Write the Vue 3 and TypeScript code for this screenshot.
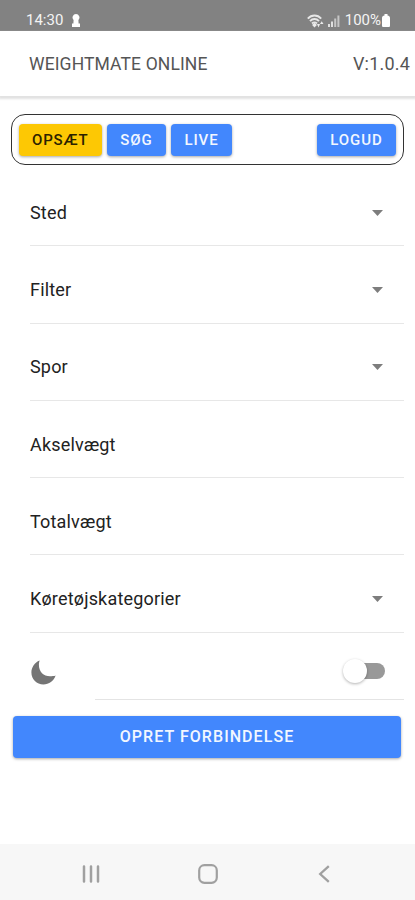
<script setup lang="ts">
import { ref } from 'vue'

interface Field {
  label: string
  select: boolean
}

const fields: Field[] = [
  { label: 'Sted', select: true },
  { label: 'Filter', select: true },
  { label: 'Spor', select: true },
  { label: 'Akselvægt', select: false },
  { label: 'Totalvægt', select: false },
  { label: 'Køretøjskategorier', select: true },
]

const tabs = ['opsæt', 'søg', 'live'] as const
const active = ref<string>('opsæt')
const dark = ref(false)
</script>

<template>
  <div class="screen">
    <div class="status">
      <span class="clock">14:30</span>
      <svg class="keyhole" width="8" height="13" viewBox="0 0 8 13">
        <path d="M4 0a3.500 3.500 0 0 1 2.400 6L6.600 9.500H8V13H0V9.500h1.400L1.600 6A3.500 3.500 0 0 1 4 0z" fill="#fff" />
      </svg>
      <svg class="wifi" width="17" height="14" viewBox="0 0 17 14">
        <g fill="none" stroke="#e6e6e6" stroke-width="1.900">
          <path d="M.8 4.600C4.600.4 10.400.4 14.200 4.600" />
          <path d="M3 7.200c2.600-2.900 6.400-2.900 9 0" />
          <path d="M5 9.500c1.500-1.500 3.500-1.500 5 0" />
        </g>
        <path d="M7.500 8.800l2.400 2.300-2.400 2.500-2.400-2.500zM10 10h3l-1.500 3.500zM13 10l1.700-2.700 1.800 2.700z" fill="#ececec" />
      </svg>
      <svg class="signal" width="12" height="12" viewBox="0 0 12 12">
        <path d="M0 9h2v3H0zM3 6.500h2V12H3z" fill="#e0e0e0" />
        <path d="M6.200 3.500h2V12h-2zM9.400.5h2V12h-2z" fill="#c6c6c6" />
      </svg>
      <span class="percent">100%</span>
      <svg class="battery" width="8" height="13" viewBox="0 0 8 13">
        <path d="M2.500 0h3v1.500C7 1.500 8 2.500 8 4v7.500c0 1-.5 1.500-1.500 1.500h-5C.5 13 0 12.500 0 11.500V4c0-1.500 1-2.500 2.500-2.500z" fill="#fff" />
      </svg>
    </div>

    <header class="header">
      <span class="title">WEIGHTMATE ONLINE</span>
      <span class="version">V:1.0.4</span>
    </header>

    <nav class="tabs">
      <button
        v-for="(tab, index) in tabs"
        :key="tab"
        :class="['btn', 'tab-' + index, { active: active === tab }]"
        @click="active = tab"
      >{{ tab.toUpperCase() }}</button>
      <button class="btn logout">LOGUD</button>
    </nav>

    <main class="list">
      <div v-for="field in fields" :key="field.label" class="row">
        <span class="label">{{ field.label }}</span>
        <svg v-if="field.select" class="caret" width="11" height="6" viewBox="0 0 11 6">
          <path d="M0 0h11L5.500 6z" fill="#7d7d7d" />
        </svg>
      </div>
      <div class="theme">
        <svg class="moon" width="25" height="25" viewBox="0 0 25 25">
          <path d="M8.600.4A14 14 0 0 0 7.900 4.800C7.900 11.800 12.500 16.300 19 16.300c2 0 4-.2 5.600-.8C22.800 20.800 18 24.400 12.400 24.400 5.700 24.400.4 19.100.4 12.400.4 7.200 3.700 2.300 8.600.4z" fill="#757575" />
        </svg>
        <div class="theme-inner">
          <button class="toggle" :class="{ on: dark }" aria-label="Mørkt tema" @click="dark = !dark">
            <span class="thumb"></span>
          </button>
        </div>
      </div>
    </main>

    <button class="btn connect">OPRET FORBINDELSE</button>

    <footer class="navbar">
      <svg width="18" height="18" viewBox="0 0 18 18">
        <path d="M2 1.500v15M9 1.500v15M16 1.500v15" stroke="#a0a0a0" stroke-width="2.500" stroke-linecap="round" />
      </svg>
      <svg width="20" height="20" viewBox="0 0 20 20">
        <rect x="1.200" y="1.200" width="17.600" height="17.600" rx="5.200" fill="none" stroke="#a0a0a0" stroke-width="2.200" />
      </svg>
      <svg width="12" height="18" viewBox="0 0 12 18">
        <path d="M10.800 1.200L2.200 9l8.600 7.800" fill="none" stroke="#a0a0a0" stroke-width="2.300" />
      </svg>
    </footer>
  </div>
</template>

<style>
body {
  margin: 0;
  background: #fff;
}
</style>

<style scoped>
.screen {
  box-sizing: border-box;
  width: 415px;
  height: 900px;
  display: flex;
  flex-direction: column;
  overflow: hidden;
  background: #fff;
  font-family: Roboto, sans-serif;
  color: #222;
}
.status {
  flex: none;
  box-sizing: border-box;
  height: 31px;
  padding: 10px 25px 0 26px;
  display: flex;
  align-items: center;
  background: #828282;
  color: #f4f4f4;
  font-size: 15px;
  line-height: 21px;
}
.clock {
  width: 46px;
}
.wifi {
  margin-left: auto;
}
.signal {
  margin: 0 5px 0 4px;
}
.percent {
  margin-right: 1px;
}
.header {
  flex: none;
  box-sizing: border-box;
  height: 65px;
  padding: 0 5px 0 29px;
  display: flex;
  align-items: center;
  justify-content: space-between;
  font-size: 18px;
  color: #555;
  box-shadow: 0 2px 2px 1px #e2e2e2;
}
.title {
  font-size: 17.500px;
  letter-spacing: 0.120px;
}
.version {
  letter-spacing: 0.200px;
}
.tabs {
  flex: none;
  box-sizing: border-box;
  width: 393px;
  height: 51px;
  margin: 18px 0 0 11px;
  padding: 0 7px 0 6.500px;
  display: flex;
  align-items: center;
  gap: 5px;
  border: 1.300px solid #333;
  border-radius: 14px;
}
.btn {
  box-sizing: border-box;
  height: 32px;
  padding: 0;
  border: 0;
  border-radius: 4px;
  background: #4287fd;
  color: #f2f7ff;
  font: 500 15px/30px Roboto, sans-serif;
  letter-spacing: 0.9px;
  white-space: nowrap;
  box-shadow: 0 1px 3px rgba(0, 0, 0, 0.35);
}
.btn.active {
  background: #fdc804;
  color: #2b2200;
}
.tab-0 {
  width: 83.500px;
}
.tab-1 {
  width: 59px;
}
.tab-2 {
  width: 61px;
}
.logout {
  width: 79px;
  margin-left: auto;
}
.list {
  flex: none;
  padding: 4px 11px 0 30px;
}
.row {
  box-sizing: border-box;
  height: 77.300px;
  padding: 11px 21px 0 0;
  display: flex;
  align-items: center;
  justify-content: space-between;
  border-bottom: 1.500px solid #e7e7e7;
}
.label {
  font-size: 18px;
  line-height: 24px;
  letter-spacing: 0.180px;
}
.theme {
  height: 67px;
  display: flex;
}
.moon {
  margin: 27px 39px 0 1px;
}
.theme-inner {
  flex: 1;
  box-sizing: border-box;
  height: 67px;
  padding: 11px 19px 0 0;
  display: flex;
  justify-content: flex-end;
  align-items: center;
  border-bottom: 1px solid #e4e4e4;
}
.toggle {
  width: 38px;
  height: 16px;
  padding: 0;
  border: 0;
  border-radius: 8px;
  background: #999;
  display: flex;
  align-items: center;
}
.thumb {
  flex: none;
  width: 24px;
  height: 24px;
  margin-left: -4px;
  border-radius: 50%;
  background: #fff;
  box-shadow: 0 1px 3px rgba(0, 0, 0, 0.3);
}
.toggle.on .thumb {
  margin-left: 18px;
}
.connect {
  flex: none;
  width: 388px;
  height: 42px;
  margin: 16px 0 0 13px;
  font-size: 16px;
  line-height: 40px;
  letter-spacing: 1.050px;
}
.navbar {
  flex: none;
  box-sizing: border-box;
  height: 56px;
  margin-top: auto;
  padding: 3px 85px 0 82px;
  display: flex;
  align-items: center;
  justify-content: space-between;
  background: #f7f7f7;
}
.navbar svg:nth-child(2) {
  margin-right: 2px;
}
</style>
